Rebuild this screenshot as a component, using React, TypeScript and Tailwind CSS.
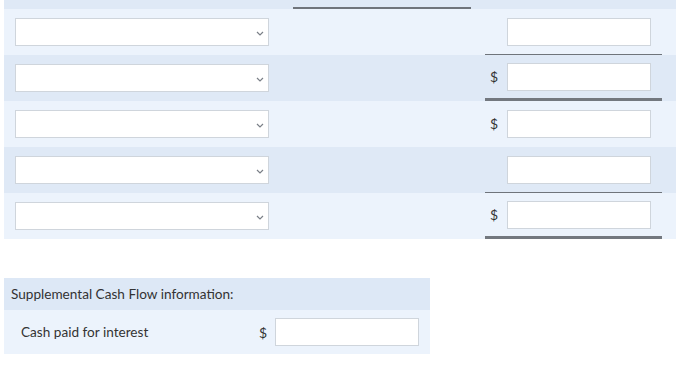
import React from "react";

const font = { fontFamily: "Lato, 'Open Sans', sans-serif" };

function Chevron() {
    return (
        <svg width="8" height="5" viewBox="0 0 8 5" className="absolute right-[4px] top-[12px]">
            <path d="M1 1 L4 4 L7 1" fill="none" stroke="#7a7f87" strokeWidth="1.2" />
        </svg>
    );
}

function SelectBox() {
    return (
        <div className="relative w-[254px] h-[28px] bg-white border border-[#cfd5dc]">
            <Chevron />
        </div>
    );
}

function Input() {
    return <div className="w-[144px] h-[28px] bg-white border border-[#cfd5dc]" />;
}

type Row = { dark: boolean; dollar: boolean; line: "none" | "thin" | "thick" };

const rows: Row[] = [
    { dark: false, dollar: false, line: "thin" },
    { dark: true, dollar: true, line: "thick" },
    { dark: false, dollar: true, line: "none" },
    { dark: true, dollar: false, line: "thin" },
    { dark: false, dollar: true, line: "thick" },
];

export default function App() {
    return (
        <div className="w-[700px] h-[376px] bg-white text-[#333] pl-[4px]" style={font}>
            {/* top of the statement, cut off */}
            <div className="w-[672px] h-[9px] bg-[#dfe9f6] flex">
                <div className="w-[289px]" />
                <div className="w-[178px] h-full border-b-2 border-[#6f747b]" />
            </div>

            {/* statement rows */}
            <div className="w-[672px]">
                {rows.map((row, i) => (
                    <div key={i} className={`flex h-[46px] ${row.dark ? "bg-[#dfe9f6]" : "bg-[#ecf3fc]"}`}>
                        <div className="w-[276px] pl-[11px] flex items-center">
                            <SelectBox />
                        </div>
                        <div className="w-[205px]" />
                        <div
                            className={`w-[177px] flex items-center ${
                                row.line === "thin"
                                    ? "border-b border-[#6f747b]"
                                    : row.line === "thick"
                                    ? "border-b-[3px] border-[#73787f]"
                                    : ""
                            }`}
                        >
                            <span className="w-[22px] pl-[5px] text-[14px] leading-none">{row.dollar ? "$" : ""}</span>
                            <Input />
                        </div>
                    </div>
                ))}
            </div>

            {/* supplemental */}
            <div className="w-[426px] mt-[39px]">
                <div className="h-[32px] bg-[#dde8f6] pl-[7px] flex items-center text-[13.6px]">
                    Supplemental Cash Flow information:
                </div>
                <div className="h-[44px] bg-[#ecf3fc] flex items-center text-[13.6px]">
                    <span className="w-[255px] pl-[17px]">Cash paid for interest</span>
                    <span className="w-[16px] text-[14px]">$</span>
                    <div className="w-[144px] h-[28px] bg-white border border-[#cfd5dc]" />
                </div>
            </div>
        </div>
    );
}
